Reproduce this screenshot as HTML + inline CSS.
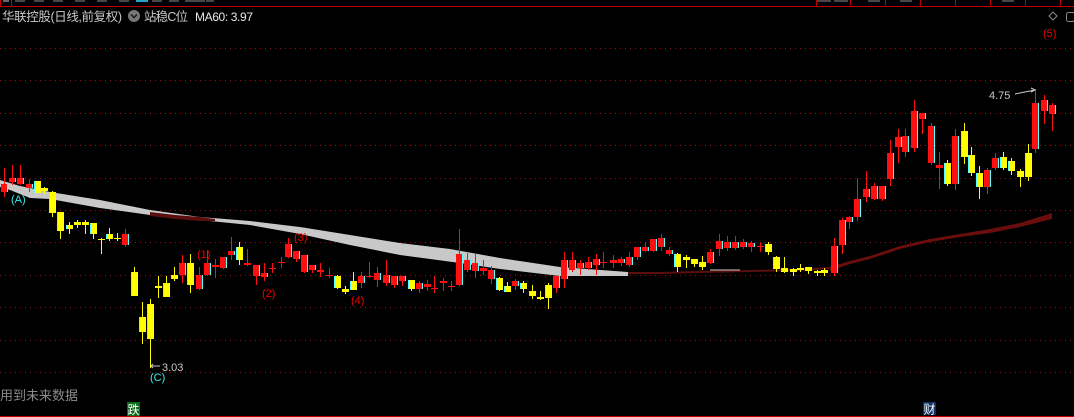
<!DOCTYPE html>
<html><head><meta charset="utf-8">
<style>
html,body{margin:0;padding:0;background:#000;width:1074px;height:417px;overflow:hidden}
svg{position:absolute;left:0;top:0}
</style></head>
<body>
<svg id="s" width="1074" height="417" xmlns="http://www.w3.org/2000/svg" font-family="Liberation Sans, Noto Sans CJK SC, sans-serif">
<rect width="1074" height="417" fill="#000"/>
<line x1="0" y1="6.5" x2="1074" y2="6.5" stroke="#c00000" stroke-width="1"/>
<line x1="0.5" y1="0" x2="0.5" y2="6" stroke="#c00000"/>
<line x1="11.5" y1="0" x2="11.5" y2="6" stroke="#c00000"/>
<rect x="3" y="0" width="6" height="2" fill="#666"/>
<g fill="#777" opacity="0.6">
<rect x="15" y="0" width="10" height="2"/><rect x="34" y="0" width="10" height="2"/><rect x="53" y="0" width="10" height="2"/>
<rect x="75" y="0" width="10" height="2"/><rect x="97" y="0" width="10" height="2"/><rect x="119" y="0" width="10" height="2"/>
<rect x="152" y="0" width="10" height="2"/><rect x="169" y="0" width="10" height="2"/><rect x="185" y="0" width="20" height="2"/>
<rect x="206" y="0" width="8" height="2"/>
<rect x="817" y="0" width="14" height="2"/><rect x="834" y="0" width="14" height="2"/><rect x="868" y="0" width="12" height="2"/>
<rect x="900" y="0" width="12" height="2"/><rect x="1002" y="0" width="12" height="2"/>
</g>
<rect x="136" y="0" width="12" height="2" fill="#3cf" opacity="0.8"/>
<g stroke="#c00000"><line x1="816.5" y1="0" x2="816.5" y2="6"/><line x1="850.5" y1="0" x2="850.5" y2="6"/><line x1="885.5" y1="0" x2="885.5" y2="6"/><line x1="920.5" y1="0" x2="920.5" y2="6"/><line x1="955.5" y1="0" x2="955.5" y2="6"/><line x1="990.5" y1="0" x2="990.5" y2="6"/><line x1="1025.5" y1="0" x2="1025.5" y2="6"/><line x1="1060.5" y1="0" x2="1060.5" y2="6"/></g>

<g id="grid" stroke="#a01010" stroke-width="1" stroke-dasharray="1,4"></g>

<text x="2" y="21" fill="#c8c8c8" font-size="12.5" textLength="120">华联控股(日线,前复权)</text>
<circle cx="134" cy="16" r="6" fill="#777"/>
<path d="M131 14.5 L134 17.5 L137 14.5" stroke="#222" stroke-width="1.6" fill="none"/>
<text x="144" y="21" fill="#c8c8c8" font-size="12.5" textLength="44">站稳C位</text>
<text x="195" y="21" fill="#e8e8e8" font-size="12" textLength="58">MA60: 3.97</text>
<path d="M1053 12 L1057 16 L1053 20 L1049 16 Z" stroke="#888" fill="none"/>
<rect x="1066.5" y="12.5" width="8" height="9" rx="2" stroke="#888" fill="none"/>
<text x="1043" y="37" fill="#e00" font-size="11">(5)</text>

<polygon fill="#c8c8c8" points="0,180 20,186 50,192 100,200 150,210 200,217 250,221 300,227 350,235 400,243 450,249 500,258 560,267 628,272 628,276 560,276 500,269 460,263 400,255 350,245 300,234 250,225 200,220 150,215 100,208 50,199 30,198 10,190 0,187"/>
<polygon fill="#5a0e0e" points="150,212 175,215 200,217 215,219 215,221 200,221 175,219 150,216"/>
<polyline fill="none" stroke="#5a0e0e" stroke-width="2" points="628,273 660,273 700,272 750,271 800,270 830,268"/>
<polygon fill="#6a0d0d" points="830,267 850,261 870,256 900,246 930,239 960,234 990,229 1020,223 1052,213 1052,219 1020,227 990,233 960,237 930,242 900,249 870,259 850,264 830,271"/>
<line x1="710" y1="270" x2="740" y2="270" stroke="#ccc" stroke-width="1"/>

<g id="c"></g>

<g fill="#e00" font-size="11">
<text x="197" y="258">(1)</text><text x="262" y="297">(2)</text><text x="294" y="241">(3)</text><text x="351" y="304">(4)</text>
</g>
<text x="11" y="203" fill="#3ee" font-size="11">(A)</text>
<text x="150" y="381" fill="#3ee" font-size="11">(C)</text>
<line x1="151" y1="366" x2="160" y2="366" stroke="#ccc"/>
<path d="M153 364 L151 366 L153 368" stroke="#ccc" fill="none"/>
<text x="162" y="371" fill="#c8c8c8" font-size="11">3.03</text>
<text x="989" y="99" fill="#c8c8c8" font-size="11">4.75</text>
<path d="M1015 94 L1035 90 M1031 88 L1035 90 L1031 92" stroke="#ccc" fill="none"/>
<text x="0" y="400" fill="#8a8a8a" font-size="13">用到未来数据</text>
<rect x="127" y="402" width="13" height="14" fill="#0a6a1a"/>
<text x="127.5" y="414" fill="#fff" font-size="12">跌</text>
<rect x="923" y="402" width="13" height="13" fill="#0c3060"/>
<text x="923.5" y="413.5" fill="#fff" font-size="12">财</text>
<line x1="0" y1="416.5" x2="1074" y2="416.5" stroke="#c00000" stroke-width="1"/>
</svg>
<script>
var NS="http://www.w3.org/2000/svg";
var g=document.getElementById('grid');
[48,80,113,145,178,210,242,275,307,340,372].forEach(function(y){var l=document.createElementNS(NS,'line');l.setAttribute('x1',0);l.setAttribute('x2',1074);l.setAttribute('y1',y+0.5);l.setAttribute('y2',y+0.5);g.appendChild(l);});
var d=[
[4,184,192,168,197,'r'],[12,178,182,165,185,'r'],[20,178,184,165,185,'r'],[29,184,188,179,192,'r'],[37,181,193,181,193,'y'],[44,188,191,187,194,'y'],
[52,192,213,191,217,'y'],[60,212,231,212,239,'y'],[69,225,229,222,234,'y'],[77,222,225,220,228,'y'],[85,222,225,220,234,'y'],[93,223,234,223,239,'y'],
[101,239,240,238,254,'y'],[109,234,239,228,241,'y'],[117,238,239,233,241,'y'],[125,234,245,229,247,'r'],[134,272,296,267,296,'y'],[142,317,332,302,344,'y'],
[150,304,339,299,368,'y'],[158,286,288,276,298,'y'],[166,283,297,276,297,'y'],[174,275,279,267,281,'y'],[182,263,275,255,283,'r'],[190,263,285,254,293,'y'],
[199,275,289,267,290,'r'],[207,263,275,250,276,'r'],[215,265,267,259,278,'r'],[223,257,268,257,269,'r'],[231,251,255,237,260,'r'],[239,247,260,242,265,'y'],
[247,263,265,249,266,'r'],[256,265,276,265,285,'r'],[264,273,277,263,281,'r'],[272,268,269,263,273,'r'],[281,262,263,257,268,'r'],[288,244,257,238,258,'r'],
[296,251,259,251,262,'r'],[304,255,272,255,273,'r'],[312,265,270,265,273,'r'],[320,270,272,263,277,'r'],[329,275,276,268,278,'r'],[337,276,288,275,289,'y'],
[345,289,292,286,294,'y'],[353,281,290,272,290,'y'],[361,276,283,272,288,'r'],[369,276,277,262,278,'r'],[377,273,280,267,287,'r'],[386,275,283,260,286,'r'],
[394,276,285,276,288,'r'],[402,276,281,276,286,'r'],[411,280,289,280,291,'y'],[419,283,289,281,293,'r'],[427,284,287,280,291,'r'],[434,288,289,276,293,'r'],
[443,281,283,278,291,'r'],[451,286,287,281,291,'r'],[459,254,285,229,286,'r'],[467,260,270,253,272,'r'],[475,263,271,253,278,'r'],[483,268,271,260,275,'r'],
[491,270,279,266,284,'r'],[499,278,290,277,291,'y'],[507,286,292,282,292,'y'],[515,281,286,279,290,'r'],[523,283,289,281,293,'y'],[532,291,296,285,299,'y'],
[540,297,299,291,300,'y'],[548,285,298,283,309,'y'],[556,276,288,276,293,'r'],[564,260,279,252,288,'r'],[572,260,270,252,272,'r'],[580,263,268,260,275,'r'],
[588,262,268,257,270,'r'],[596,259,265,254,275,'r'],[603,262,263,252,268,'r'],[613,260,263,255,268,'r'],[621,259,263,257,266,'r'],[629,257,265,252,267,'r'],
[637,247,257,247,260,'r'],[645,247,251,242,252,'r'],[653,239,251,239,252,'r'],[661,238,247,234,251,'r'],[669,250,254,247,256,'r'],[677,254,267,253,272,'y'],
[686,257,260,255,268,'y'],[694,259,264,259,267,'y'],[702,262,267,256,270,'y'],[710,252,263,249,264,'r'],[719,241,249,234,256,'r'],[727,242,248,236,251,'r'],
[735,242,248,236,250,'r'],[743,242,247,239,249,'r'],[751,243,247,241,252,'r'],[760,246,247,243,252,'r'],[768,244,252,242,255,'y'],[776,257,269,256,272,'y'],
[784,268,272,257,273,'y'],[793,269,272,268,276,'y'],[800,268,270,264,272,'y'],[808,267,271,267,274,'y'],[817,271,273,270,276,'y'],[824,270,273,268,276,'y'],
[834,246,273,238,276,'r'],[842,220,245,218,254,'r'],[849,217,222,216,229,'r'],[857,199,217,178,221,'r'],[866,189,197,171,202,'r'],[874,186,199,183,200,'r'],
[882,186,199,186,201,'r'],[890,153,179,140,186,'r'],[898,137,147,129,163,'r'],[905,136,152,129,157,'r'],[914,111,148,100,152,'r'],[922,113,119,113,134,'r'],
[931,126,163,123,165,'r'],[939,165,168,152,189,'r'],[947,163,184,160,186,'y'],[955,136,184,129,190,'r'],[964,131,157,123,164,'y'],[971,155,173,147,176,'y'],
[979,173,187,166,199,'y'],[987,170,187,168,194,'r'],[995,158,168,153,170,'r'],[1003,157,168,152,170,'y'],[1011,161,171,158,175,'y'],[1020,171,177,169,187,'y'],
[1028,153,177,144,181,'y'],[1035,103,149,89,153,'r'],[1044,100,111,95,124,'r'],[1052,105,114,103,131,'r']];
var c=document.getElementById('c'),h='';
d.forEach(function(k){var x=k[0],col=k[5]=='r'?'#ff1010':'#ffff00';
h+='<rect x="'+x+'" y="'+k[3]+'" width="1" height="'+(k[4]-k[3])+'" fill="'+col+'"/>';
var bh=Math.max(1,k[2]-k[1]);
h+='<rect x="'+(x-3)+'" y="'+k[1]+'" width="7" height="'+bh+'" fill="'+col+'"/>';
if(bh>3){h+='<rect x="'+(k[5]=='r'?x+3:x-3)+'" y="'+k[1]+'" width="1" height="'+bh+'" fill="#5ff"/>';}
});
c.innerHTML=h;
</script>
</body></html>
